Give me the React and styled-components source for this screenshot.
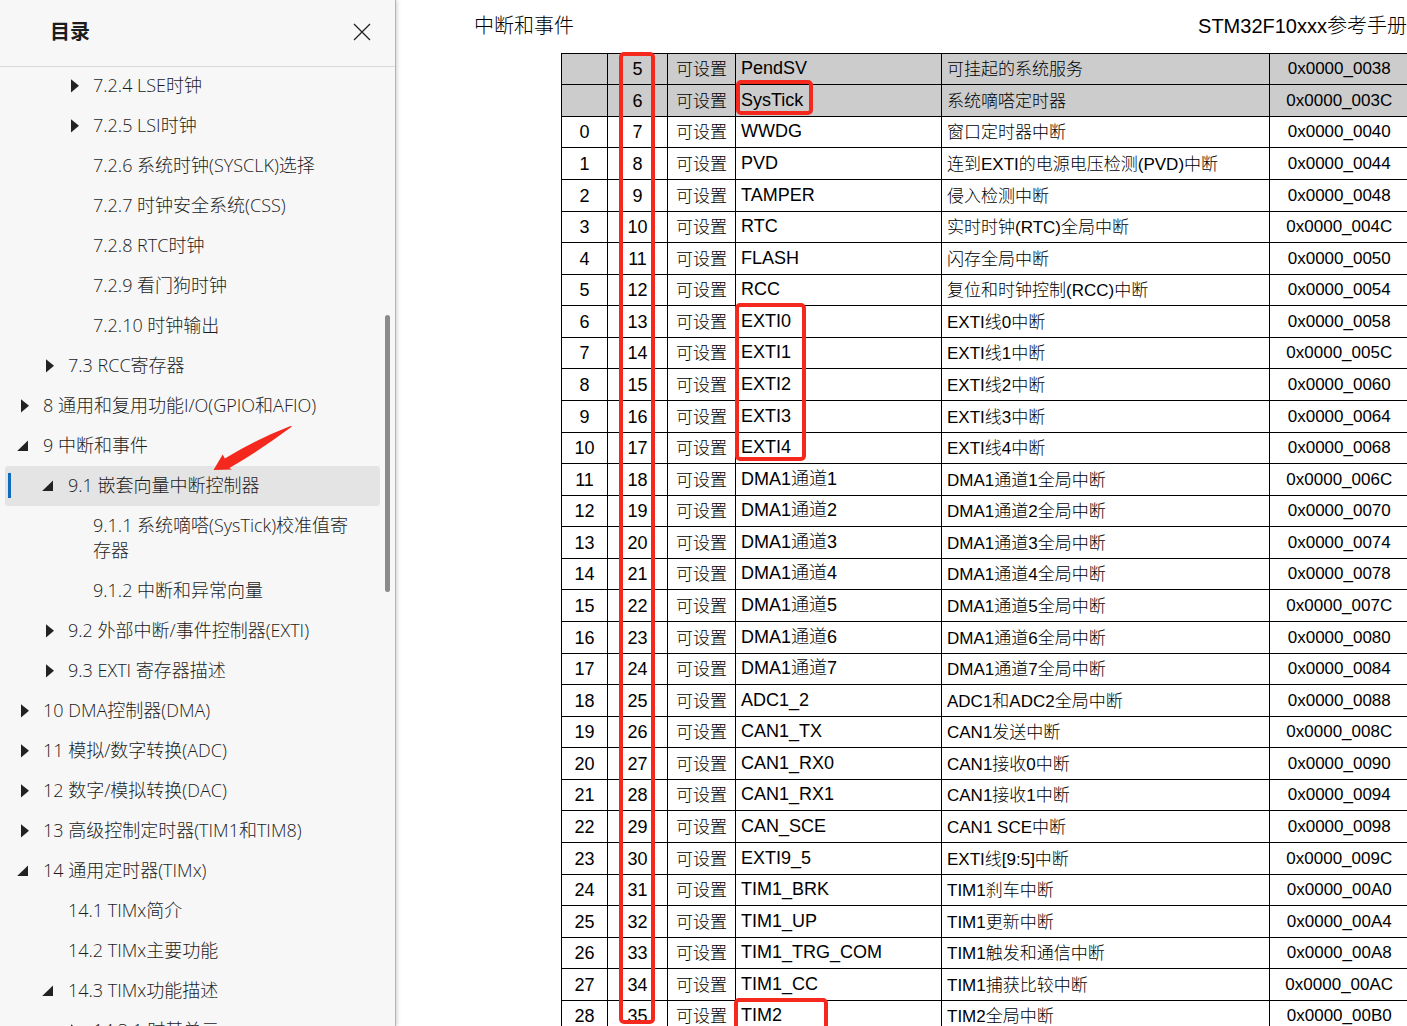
import React from "react";
import styled, { createGlobalStyle, css } from "styled-components";

const RED = "#f5281e";

const GlobalStyle = createGlobalStyle`
  *, *::before, *::after { box-sizing: border-box; }
  body { margin: 0; background: #fff; overflow: hidden; }
`;

const Viewer = styled.div`
  display: flex;
  height: 100vh;
  overflow: hidden;
`;

/* ---------- outline panel ---------- */

const Sidebar = styled.nav`
  position: relative;
  z-index: 1;
  display: flex;
  flex-direction: column;
  flex: none;
  width: 396px;
  background: #f7f7f7;
  border-right: 1px solid #b4b4b4;
  box-shadow: 1px 0 4px rgba(0, 0, 0, 0.2);
  color: #1c1c1c;
  font-family: "Open Sans", "Noto Sans CJK SC", sans-serif;
`;

const SidebarHeader = styled.header`
  display: flex;
  flex: none;
  align-items: center;
  justify-content: space-between;
  height: 66px;
  padding: 0 20px 3px 50px;
  box-shadow: 0 1px 0 #d9d9d9;
`;

const SidebarTitle = styled.h2`
  margin: 0;
  font-size: 20px;
  line-height: 28px;
  font-weight: 700;
`;

const CloseButton = styled.button`
  display: flex;
  align-items: center;
  justify-content: center;
  width: 26px;
  height: 26px;
  padding: 0;
  border: 0;
  background: none;
  color: #222;
`;

const OutlineList = styled.ul`
  flex: 1;
  min-height: 0;
  margin: 0;
  padding: 0 15px 0 5px;
  overflow: hidden;
  list-style: none;
`;

const OutlineItem = styled.li`
  position: relative;
  display: flex;
  align-items: flex-start;
  padding: 7px 14px 8px ${(p) => 11 + p.$level * 25}px;
  border-radius: 3px;
  ${(p) =>
    p.$selected &&
    css`
      background: #e4e4e4;
      &::before {
        content: "";
        position: absolute;
        left: 3px;
        top: 7px;
        bottom: 8px;
        width: 3px;
        background: #0f6cbd;
      }
    `}
`;

const Toggle = styled.button`
  display: flex;
  flex: none;
  align-items: center;
  width: 14px;
  height: 25px;
  margin-right: 13px;
  padding: 0;
  border: 0;
  background: none;
  color: #222;
`;

const ToggleSpace = styled.span`
  flex: none;
  width: 27px;
`;

const OutlineLink = styled.a`
  color: inherit;
  font-size: 18px;
  line-height: 25px;
  font-weight: 300;
  text-decoration: none;
`;

const ScrollThumb = styled.div`
  position: absolute;
  top: 315px;
  right: 5px;
  width: 5px;
  height: 277px;
  border-radius: 3px;
  background: #8b8b8b;
`;

const Arrow = styled.svg`
  position: absolute;
  left: 212px;
  top: 424px;
  pointer-events: none;
`;

/* ---------- document page ---------- */

const Page = styled.main`
  flex: 1;
  min-width: 0;
  overflow: hidden;
  color: #000;
  font-family: "Liberation Sans", "Noto Sans CJK SC", sans-serif;
  font-weight: 300;
`;

const RunningHead = styled.header`
  display: flex;
  justify-content: space-between;
  height: 53px;
  padding: 11px 0 0 78px;
  font-size: 20px;
  line-height: 30px;
  white-space: nowrap;
`;

const TableArea = styled.div`
  position: relative;
  margin-left: 165px;
`;

const VectorTable = styled.table`
  width: 100%;
  table-layout: fixed;
  border-collapse: collapse;
  border-top: 1px solid #000;
  border-left: 1px solid #000;
`;

const Col = styled.col`
  width: ${(p) => (p.$width ? `${p.$width}px` : "auto")};
`;

const Row = styled.tr`
  height: 32px;
  background: ${(p) => (p.$shaded ? "#ccc" : "#fff")};
  &:nth-child(7n + 1),
  &:nth-child(7n + 3),
  &:nth-child(7n + 6) {
    height: 31px;
  }
`;

const Cell = styled.td`
  padding: 0;
  border-bottom: 1px solid #000;
  border-left: 1px solid #000;
  font-size: 18px;
  line-height: 26px;
  white-space: nowrap;
  text-align: center;
`;

const NameCell = styled(Cell)`
  padding: 0 0 2px 5px;
  text-align: left;
`;

const KindCell = styled(Cell)`
  padding-top: 2px;
  font-size: 17px;
`;

const DescriptionCell = styled(Cell)`
  padding: 2px 0 0 5px;
  font-size: 17px;
  text-align: left;
`;

const AddressCell = styled(Cell)`
  padding-left: 2px;
  font-size: 17px;
`;

const Mark = styled.div`
  position: absolute;
  left: ${(p) => p.$x}px;
  top: ${(p) => p.$y}px;
  width: ${(p) => p.$w}px;
  height: ${(p) => p.$h}px;
  border: 4px solid ${RED};
  border-radius: 5px;
  pointer-events: none;
`;

/* level, state (closed / open / leaf), title */
const OUTLINE = [
  [2, "closed", "7.2.4 LSE时钟"],
  [2, "closed", "7.2.5 LSI时钟"],
  [2, "leaf", "7.2.6 系统时钟(SYSCLK)选择"],
  [2, "leaf", "7.2.7 时钟安全系统(CSS)"],
  [2, "leaf", "7.2.8 RTC时钟"],
  [2, "leaf", "7.2.9 看门狗时钟"],
  [2, "leaf", "7.2.10 时钟输出"],
  [1, "closed", "7.3 RCC寄存器"],
  [0, "closed", "8 通用和复用功能I/O(GPIO和AFIO)"],
  [0, "open", "9 中断和事件"],
  [1, "open", "9.1 嵌套向量中断控制器"],
  [2, "leaf", "9.1.1 系统嘀嗒(SysTick)校准值寄存器"],
  [2, "leaf", "9.1.2 中断和异常向量"],
  [1, "closed", "9.2 外部中断/事件控制器(EXTI)"],
  [1, "closed", "9.3 EXTI 寄存器描述"],
  [0, "closed", "10 DMA控制器(DMA)"],
  [0, "closed", "11 模拟/数字转换(ADC)"],
  [0, "closed", "12 数字/模拟转换(DAC)"],
  [0, "closed", "13 高级控制定时器(TIM1和TIM8)"],
  [0, "open", "14 通用定时器(TIMx)"],
  [1, "leaf", "14.1 TIMx简介"],
  [1, "leaf", "14.2 TIMx主要功能"],
  [1, "open", "14.3 TIMx功能描述"],
  [2, "closed", "14.3.1 时基单元"],
];

const SELECTED = "9.1 嵌套向量中断控制器";

/* position, priority, name, description, address */
const VECTORS = [
  ["", 5, "PendSV", "可挂起的系统服务", "0x0000_0038"],
  ["", 6, "SysTick", "系统嘀嗒定时器", "0x0000_003C"],
  [0, 7, "WWDG", "窗口定时器中断", "0x0000_0040"],
  [1, 8, "PVD", "连到EXTI的电源电压检测(PVD)中断", "0x0000_0044"],
  [2, 9, "TAMPER", "侵入检测中断", "0x0000_0048"],
  [3, 10, "RTC", "实时时钟(RTC)全局中断", "0x0000_004C"],
  [4, 11, "FLASH", "闪存全局中断", "0x0000_0050"],
  [5, 12, "RCC", "复位和时钟控制(RCC)中断", "0x0000_0054"],
  [6, 13, "EXTI0", "EXTI线0中断", "0x0000_0058"],
  [7, 14, "EXTI1", "EXTI线1中断", "0x0000_005C"],
  [8, 15, "EXTI2", "EXTI线2中断", "0x0000_0060"],
  [9, 16, "EXTI3", "EXTI线3中断", "0x0000_0064"],
  [10, 17, "EXTI4", "EXTI线4中断", "0x0000_0068"],
  [11, 18, "DMA1通道1", "DMA1通道1全局中断", "0x0000_006C"],
  [12, 19, "DMA1通道2", "DMA1通道2全局中断", "0x0000_0070"],
  [13, 20, "DMA1通道3", "DMA1通道3全局中断", "0x0000_0074"],
  [14, 21, "DMA1通道4", "DMA1通道4全局中断", "0x0000_0078"],
  [15, 22, "DMA1通道5", "DMA1通道5全局中断", "0x0000_007C"],
  [16, 23, "DMA1通道6", "DMA1通道6全局中断", "0x0000_0080"],
  [17, 24, "DMA1通道7", "DMA1通道7全局中断", "0x0000_0084"],
  [18, 25, "ADC1_2", "ADC1和ADC2全局中断", "0x0000_0088"],
  [19, 26, "CAN1_TX", "CAN1发送中断", "0x0000_008C"],
  [20, 27, "CAN1_RX0", "CAN1接收0中断", "0x0000_0090"],
  [21, 28, "CAN1_RX1", "CAN1接收1中断", "0x0000_0094"],
  [22, 29, "CAN_SCE", "CAN1 SCE中断", "0x0000_0098"],
  [23, 30, "EXTI9_5", "EXTI线[9:5]中断", "0x0000_009C"],
  [24, 31, "TIM1_BRK", "TIM1刹车中断", "0x0000_00A0"],
  [25, 32, "TIM1_UP", "TIM1更新中断", "0x0000_00A4"],
  [26, 33, "TIM1_TRG_COM", "TIM1触发和通信中断", "0x0000_00A8"],
  [27, 34, "TIM1_CC", "TIM1捕获比较中断", "0x0000_00AC"],
  [28, 35, "TIM2", "TIM2全局中断", "0x0000_00B0"],
];

function ToggleIcon({ open }) {
  return (
    <svg width="14" height="14" viewBox="0 0 14 14" fill="currentColor" aria-hidden="true">
      <path d={open ? "M12 1.4V12H1.2Z" : "M5 .2V13.4L13 6.8Z"} />
    </svg>
  );
}

function OutlineEntry({ level, state, title }) {
  return (
    <OutlineItem $level={level} $selected={title === SELECTED}>
      {state === "leaf" ? (
        <ToggleSpace />
      ) : (
        <Toggle type="button" aria-label={title} aria-expanded={state === "open"}>
          <ToggleIcon open={state === "open"} />
        </Toggle>
      )}
      <OutlineLink href="#">{title}</OutlineLink>
    </OutlineItem>
  );
}

export default function App() {
  return (
    <Viewer>
      <GlobalStyle />
      <Sidebar aria-label="目录">
        <SidebarHeader>
          <SidebarTitle>目录</SidebarTitle>
          <CloseButton type="button" aria-label="关闭">
            <svg width="18" height="18" viewBox="0 0 18 18" fill="none" stroke="currentColor" strokeWidth="1.3">
              <path d="M1 1L17 17M17 1L1 17" />
            </svg>
          </CloseButton>
        </SidebarHeader>
        <OutlineList>
          {OUTLINE.map(([level, state, title]) => (
            <OutlineEntry key={title} level={level} state={state} title={title} />
          ))}
        </OutlineList>
        <ScrollThumb />
        <Arrow width="82" height="50" viewBox="0 0 82 50" fill={RED} aria-hidden="true">
          <path d="M1.5 46L10.7 30.4L12.8 34.4Q45 15 78.5 2L80 2.6Q50 25 17.4 44L20 45.6Z" />
        </Arrow>
      </Sidebar>
      <Page>
        <RunningHead>
          <span>中断和事件</span>
          <span>STM32F10xxx参考手册</span>
        </RunningHead>
        <TableArea>
          <VectorTable>
            <colgroup>
              <Col $width={46} />
              <Col $width={60} />
              <Col $width={68} />
              <Col $width={206} />
              <Col />
              <Col $width={138} />
            </colgroup>
            <tbody>
              {VECTORS.map(([position, priority, name, description, address]) => (
                <Row key={priority} $shaded={position === ""}>
                  <Cell>{position}</Cell>
                  <Cell>{priority}</Cell>
                  <KindCell>可设置</KindCell>
                  <NameCell>{name}</NameCell>
                  <DescriptionCell>{description}</DescriptionCell>
                  <AddressCell>{address}</AddressCell>
                </Row>
              ))}
            </tbody>
          </VectorTable>
          <Mark $x={58} $y={-1} $w={36} $h={972} />
          <Mark $x={175} $y={27} $w={77} $h={35} />
          <Mark $x={174} $y={250} $w={71} $h={158} />
          <Mark $x={173} $y={945} $w={94} $h={50} />
        </TableArea>
      </Page>
    </Viewer>
  );
}
